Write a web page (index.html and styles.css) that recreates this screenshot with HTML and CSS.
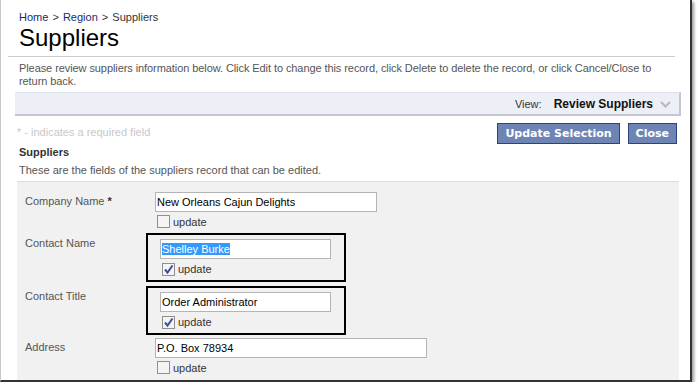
FILE: index.html
```html
<!DOCTYPE html>
<html lang="en">
<head>
    <meta charset="UTF-8">
    <title>Suppliers</title>
    <link rel="stylesheet" href="styles.css">
</head>
<body>

    <div class="window">

        <!-- Page Header -->
        <div class="header">
            <div class="breadcrumb">
                <a href="#">Home</a> <span class="sep">&gt;</span> <a href="#">Region</a> <span class="sep">&gt;</span> <span class="current">Suppliers</span>
            </div>
            <h1>Suppliers</h1>
        </div>

        <p class="description">Please review suppliers information below. Click Edit to change this record, click Delete to delete the record, or click Cancel/Close to return back.</p>

        <!-- View Bar -->
        <div class="view-bar">
            <span class="view-label">View:</span>
            <span class="view-name">Review Suppliers</span>
            <svg class="view-arrow" width="11" height="7" viewBox="0 0 11 7"><path d="M1 1 L5.5 5.5 L10 1" fill="none" stroke="#b5b8c2" stroke-width="2"/></svg>
        </div>

        <!-- Toolbar -->
        <div class="toolbar">
            <span class="required-note">* - indicates a required field</span>
            <div class="actions">
                <button class="btn">Update Selection</button>
                <button class="btn">Close</button>
            </div>
        </div>

        <h2>Suppliers</h2>
        <p class="category-note">These are the fields of the suppliers record that can be edited.</p>

        <!-- Form -->
        <div class="form-panel">
            <div class="field">
                <div class="field-label">Company Name <span class="req">*</span></div>
                <div class="field-value">
                    <div class="input input-company">New Orleans Cajun Delights</div>
                    <label class="check"><span class="box"></span>update</label>
                </div>
            </div>

            <div class="field field-marked">
                <div class="field-label">Contact Name</div>
                <div class="field-value marker">
                    <div class="input input-contact"><span class="selected">Shelley Burke</span></div>
                    <label class="check"><span class="box checked"><svg width="11" height="11" viewBox="0 0 11 11"><path d="M2 5.5 L4.5 8.5 L9.5 1.5" fill="none" stroke="#3b4f9a" stroke-width="2"/></svg></span>update</label>
                </div>
            </div>

            <div class="field field-marked">
                <div class="field-label">Contact Title</div>
                <div class="field-value marker">
                    <div class="input input-contact">Order Administrator</div>
                    <label class="check"><span class="box checked"><svg width="11" height="11" viewBox="0 0 11 11"><path d="M2 5.5 L4.5 8.5 L9.5 1.5" fill="none" stroke="#3b4f9a" stroke-width="2"/></svg></span>update</label>
                </div>
            </div>

            <div class="field">
                <div class="field-label">Address</div>
                <div class="field-value">
                    <div class="input input-address">P.O. Box 78934</div>
                    <label class="check"><span class="box"></span>update</label>
                </div>
            </div>
        </div>

    </div>

</body>
</html>
```

FILE: styles.css
```css
/* --- Base --- */
body {
    margin: 0;
    background-color: white;
    font-family: 'Liberation Sans', Arial, sans-serif;
    font-size: 11px;
    color: #555;
}

/* --- Window frame (screenshot edge) --- */
.window {
    width: 692px;
    height: 382px;
    box-sizing: border-box;
    border-left: 1px solid #c8c8c8;
    border-right: 2px solid #333;
    border-bottom: 2px solid #333;
    box-shadow: 2px 2px 3px #999;
    background-color: white;
    overflow: hidden;
}

/* --- Header --- */
.header {
    padding: 11px 0 0 18px;
}

.breadcrumb {
    font-size: 11px;
    line-height: 13px;
    color: #333;
}

.breadcrumb a {
    color: #1c2a6b;
    text-decoration: none;
}

.breadcrumb .sep {
    color: #333;
    margin: 0 1px;
}

h1 {
    font-size: 24px;
    font-weight: normal;
    color: #000;
    margin: 0;
    line-height: 28px;
    padding-bottom: 4px;
    border-bottom: 1px solid #ccc;
    margin-left: -11px;
    padding-left: 11px;
    width: 656px;
}

.description {
    margin: 5px 0 0 18px;
    line-height: 13px;
    width: 650px;
    letter-spacing: -0.08px;
}

/* --- View Bar --- */
.view-bar {
    margin: 4px 9px 0 14px;
    height: 21px;
    background-color: #eceff6;
    border-top: 1px solid #dfe2ea;
    border-right: 2px solid #c4c7cf;
    border-bottom: 2px solid #c4c7cf;
    display: flex;
    align-items: center;
    justify-content: flex-end;
    padding-right: 8px;
}

.view-label {
    color: #333;
    margin-right: 12px;
}

.view-name {
    color: #111;
    font-weight: bold;
    font-size: 12px;
    margin-right: 7px;
}

.view-arrow {
    margin-top: 1px;
}

/* --- Toolbar --- */
.toolbar {
    display: flex;
    justify-content: space-between;
    align-items: flex-start;
    margin: 7px 13px 0 16px;
}

.required-note {
    color: #c8c8c8;
    margin-top: 3px;
}

.actions {
    display: flex;
    gap: 8px;
}

.btn {
    font-family: 'DejaVu Sans', Verdana, sans-serif;
    font-size: 11px;
    font-weight: bold;
    color: white;
    background-color: #6d84b4;
    border: 1px solid #29447e;
    height: 21px;
    padding: 0 7px;
    cursor: pointer;
}

h2 {
    font-size: 11px;
    font-weight: bold;
    color: #333;
    margin: 0 0 0 18px;
    line-height: 16px;
}

.category-note {
    margin: 4px 0 0 18px;
    line-height: 13px;
}

/* --- Form Panel --- */
.form-panel {
    margin: 4px 11px 0 16px;
    background-color: #f1f1f1;
    border-top: 1px solid #dcdde6;
    padding: 10px 0 8px 8px;
}

.field {
    display: flex;
    align-items: flex-start;
}

.field-label {
    width: 130px;
    flex-shrink: 0;
    color: #555;
    padding-top: 3px;
    line-height: 13px;
}

.field-label .req {
    color: #333;
    font-weight: bold;
}

.field-marked .field-label {
    width: 121px;
    padding-top: 6px;
}

.field-value {
    display: flex;
    flex-direction: column;
}

.marker {
    border: 2px solid #000;
    width: 171px;
    padding: 4px 13px 1px 12px;
    margin: 2px 0;
}

.field-marked + .field:not(.field-marked) {
    margin-top: 1px;
}

.input {
    box-sizing: border-box;
    height: 20px;
    border: 1px solid #b5b5b5;
    background-color: white;
    color: #000;
    padding: 0 1px;
    line-height: 18px;
    white-space: nowrap;
    overflow: hidden;
}

.input-company { width: 222px; }
.input-contact { width: 171px; }
.input-address { width: 272px; }

.selected {
    background-color: #3399ff;
    color: white;
}

/* --- Checkboxes --- */
.check {
    display: flex;
    align-items: center;
    height: 19px;
    color: #333;
    padding-left: 2px;
}

.marker .check {
    height: 20px;
}

.check .box {
    width: 11px;
    height: 11px;
    border: 1px solid #8e8f8f;
    background-color: #f4f4f4;
    margin-right: 3px;
    display: flex;
}
```
